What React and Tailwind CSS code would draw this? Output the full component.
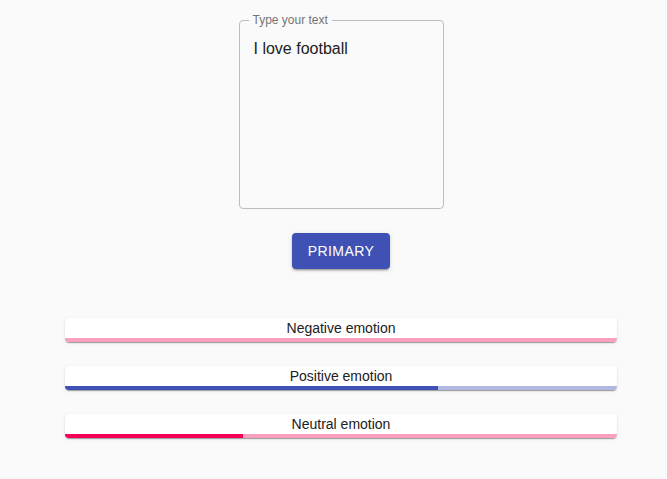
const EMOTIONS = [
  { label: 'Negative emotion', value: 0, bar: 'bg-[#f50057]', track: 'bg-[#f9a0bf]' },
  { label: 'Positive emotion', value: 67.6, bar: 'bg-[#3f51b5]', track: 'bg-[#b1b8e0]' },
  { label: 'Neutral emotion', value: 32.2, bar: 'bg-[#f50057]', track: 'bg-[#f9a0bf]' },
]

export default function App() {
  return (
    <div className="min-h-[479px] bg-[#fafafa] pl-[15px] font-['Liberation_Sans',Arial,sans-serif] text-[#212121]">
      <div className="flex flex-col items-center pt-[13px]">

        {/* Text input */}
        <fieldset className="w-[205px] h-[196px] border border-[#bdbdbd] rounded-[4px] px-[14px] m-0">
          <legend className="px-[4px] ml-[-5px] text-[12px] leading-[14px] text-[#757575]">Type your text</legend>
          <div className="pt-[12px] text-[16px] leading-[19px] text-[#212121]">I love football</div>
        </fieldset>

        {/* Button */}
        <button className="mt-[24px] w-[98px] h-[36px] rounded-[4px] bg-[#3f51b5] text-white text-[14px] font-medium tracking-[0.4px] shadow-[0_3px_1px_-2px_rgba(0,0,0,0.2),0_2px_2px_0_rgba(0,0,0,0.14),0_1px_5px_0_rgba(0,0,0,0.12)]">
          PRIMARY
        </button>

        {/* Emotion bars */}
        <div className="mt-[49px] w-[552px] flex flex-col gap-[24px]">
          {EMOTIONS.map((e) => (
            <div
              key={e.label}
              className="bg-white rounded-[4px] overflow-hidden shadow-[0_2px_1px_-1px_rgba(0,0,0,0.2),0_1px_1px_0_rgba(0,0,0,0.14),0_1px_3px_0_rgba(0,0,0,0.12)]"
            >
              <div className="h-[20px] leading-[20px] text-center text-[14px] text-[#212121]">{e.label}</div>
              <div className={`h-[4px] ${e.track}`}>
                <div className={`h-full ${e.bar}`} style={{ width: `${e.value}%` }} />
              </div>
            </div>
          ))}
        </div>

      </div>
    </div>
  )
}
